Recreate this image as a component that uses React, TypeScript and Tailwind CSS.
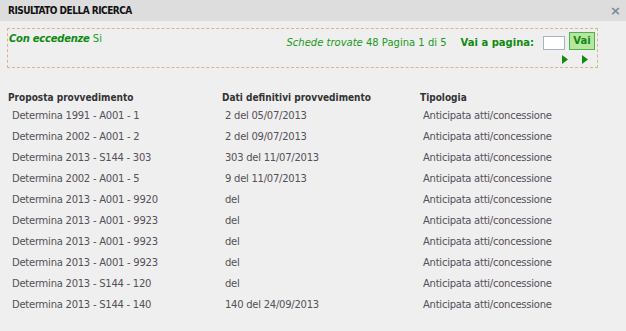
import React from "react";

const rows: [string, string][] = [
  ["Determina 1991 - A001 - 1", "2 del 05/07/2013"],
  ["Determina 2002 - A001 - 2", "2 del 09/07/2013"],
  ["Determina 2013 - S144 - 303", "303 del 11/07/2013"],
  ["Determina 2002 - A001 - 5", "9 del 11/07/2013"],
  ["Determina 2013 - A001 - 9920", "del"],
  ["Determina 2013 - A001 - 9923", "del"],
  ["Determina 2013 - A001 - 9923", "del"],
  ["Determina 2013 - A001 - 9923", "del"],
  ["Determina 2013 - S144 - 120", "del"],
  ["Determina 2013 - S144 - 140", "140 del 24/09/2013"],
];

function Arrow() {
  return (
    <svg width="6" height="9" viewBox="0 0 6 9">
      <polygon points="0,0 6,4.5 0,9" fill="#118a11" />
    </svg>
  );
}

const cond = { fontFamily: '"DejaVu Sans Condensed", "DejaVu Sans", Verdana, sans-serif' };

export default function App() {
  return (
    <div
      className="w-[626px] h-[331px] bg-[#efefef] overflow-hidden"
      style={{ fontFamily: '"DejaVu Sans", Verdana, sans-serif' }}
    >
      <div className="h-[21px] bg-[#dddddd] flex items-center justify-between pl-[8px] pr-[5px]">
        <span className="text-[10px] font-bold text-[#111] tracking-[-0.5px]" style={cond}>
          RISULTATO DELLA RICERCA
        </span>
        <span className="text-[13px] font-bold text-[#7a8a99] leading-none">×</span>
      </div>
      <div className="px-[7px] pt-[7px]">
        <div className="w-[591px] h-[40px] border border-dashed border-[#d2b88c] flex justify-between">
          <div className="pl-[1px] pt-[2px] text-[10px] text-[#1a9a1a]">
            <span className="italic font-bold text-[#0f8a0f] tracking-[-0.25px]">Con eccedenze</span> Si
          </div>
          <div className="flex flex-col items-end pr-[2px] pt-[2px]">
            <div className="flex items-center">
              <span className="text-[10px] text-[#1a9a1a] mt-[3px]">
                <span className="italic">Schede trovate</span> 48 Pagina 1 di 5
              </span>
              <span className="text-[10px] font-bold text-[#0f8a0f] ml-[14px] mt-[3px]">Vai a pagina:</span>
              <div className="w-[22px] h-[14px] bg-white border border-[#a8b4c4] ml-[9px] mt-[5px]" />
              <div className="w-[26px] h-[18px] bg-[#b6e6a0] border border-[#4fb04f] ml-[4px] flex items-center justify-center text-[10px] font-bold text-[#0f8a0f]">
                Vai
              </div>
            </div>
            <div className="flex gap-[14px] pr-[7px] mt-[5px]">
              <Arrow />
              <Arrow />
            </div>
          </div>
        </div>
      </div>
      <div className="pl-[8px] pt-[22px] text-[10px]">
        <div className="flex h-[14px] items-center font-bold text-[#333]" style={cond}>
          <div className="w-[214px]">Proposta provvedimento</div>
          <div className="w-[198px]">Dati definitivi provvedimento</div>
          <div>Tipologia</div>
        </div>
        <div className="pt-[1px]">
          {rows.map((r, i) => (
            <div key={i} className="flex h-[21px] items-center text-[#555059] tracking-[-0.25px]">
              <div className="w-[214px] pl-[4px]">{r[0]}</div>
              <div className="w-[198px] pl-[3px]">{r[1]}</div>
              <div className="pl-[3px]">Anticipata atti/concessione</div>
            </div>
          ))}
        </div>
      </div>
    </div>
  );
}
